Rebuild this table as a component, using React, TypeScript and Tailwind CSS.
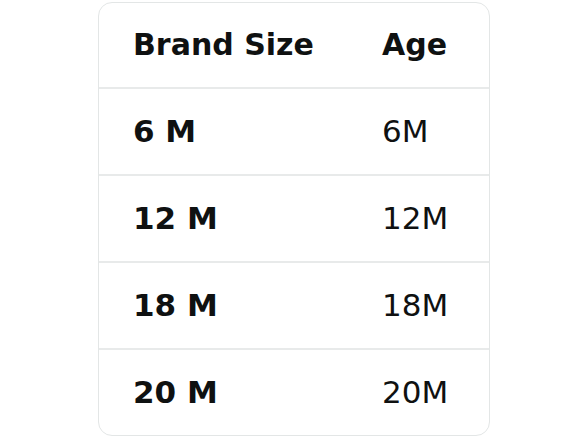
const rows = [
  { size: "6 M", age: "6M" },
  { size: "12 M", age: "12M" },
  { size: "18 M", age: "18M" },
  { size: "20 M", age: "20M" },
];

export default function App() {
  return (
    <div
      className="w-[588px] h-[441px] bg-white pt-[2px] pl-[98px]"
      style={{ fontFamily: '"DejaVu Sans", "Noto Sans", sans-serif' }}
    >
      <div className="w-[392px] rounded-[14px] border border-[#e3e6e6] overflow-hidden text-[#0f1111]">
        <div className="flex h-[86px] items-center border-b-2 border-[#e8eaea] pb-[1px]">
          <div className="w-[249px] pl-[34px] text-[30px] font-bold">Brand Size</div>
          <div className="pl-[34px] text-[30px] font-bold">Age</div>
        </div>
        {rows.map((r, i) => (
          <div
            key={r.size}
            className={
              i < rows.length - 1
                ? "flex h-[87px] items-center border-b-2 border-[#e8eaea]"
                : "flex h-[85px] items-center"
            }
          >
            <div className="w-[249px] pl-[34px] text-[31px] font-bold">{r.size}</div>
            <div className="pl-[34px] text-[31px]">{r.age}</div>
          </div>
        ))}
      </div>
    </div>
  );
}
